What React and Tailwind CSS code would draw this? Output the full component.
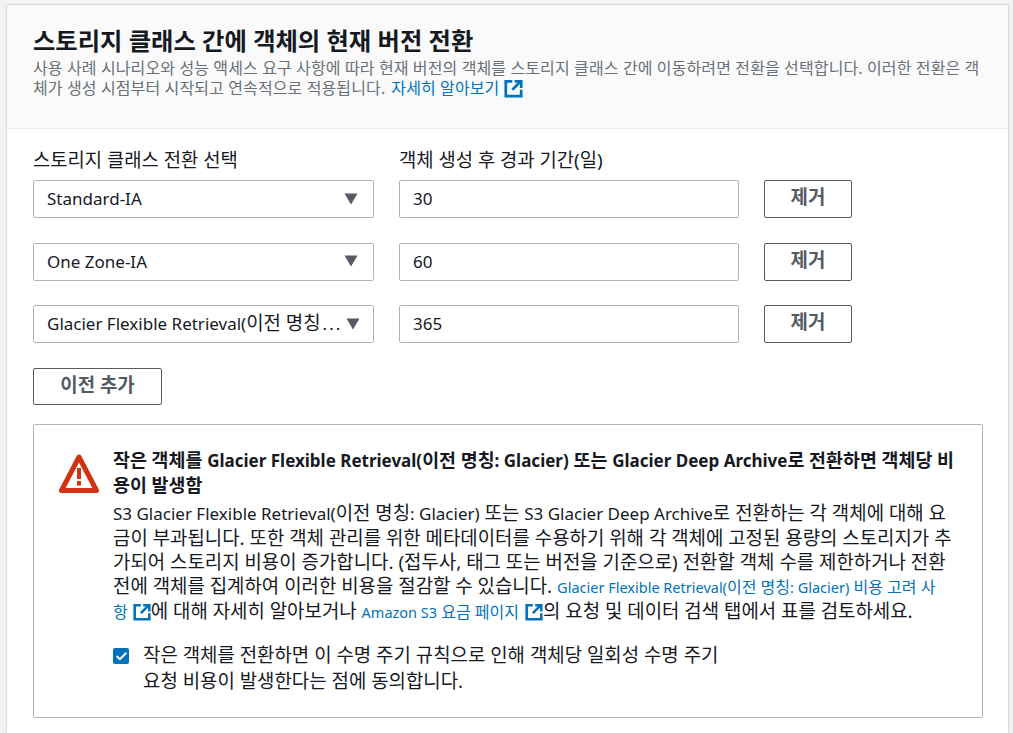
import { Check } from 'lucide-react'

function L({ children }) {
  return <span className="text-[17px]">{children}</span>
}

function Link({ children }) {
  return <a className="text-[16px] text-[#0073bb]">{children}</a>
}

function LinkL({ children }) {
  return <span className="text-[14.500px]">{children}</span>
}

const rows = [
  { storage: <L>Standard-IA</L>, days: '30' },
  { storage: <L>One Zone-IA</L>, days: '60' },
  { storage: <><L>Glacier Flexible Retrieval(</L>이전 명칭<span className="ml-[2px] text-[17px] tracking-[2px]">...</span></>, days: '365' },
]

function ExternalIcon({ className }) {
  return (
    <svg viewBox="0 0 16 16" fill="none" stroke="currentColor" strokeWidth="2.300" className={className}>
      <path d="M7 2H1.500v12.500h13V9" />
      <path d="M9 2h5.500v5.500" />
      <path d="M14.500 1.500 7 9" />
    </svg>
  )
}

function Select({ value }) {
  return (
    <div className="flex items-center w-[341px] h-[38px] pl-[13px] pr-[15px] pb-[1px] gap-1 bg-white border border-[#aab7b8] rounded-[2px]">
      <span className="flex-1 whitespace-nowrap text-[#16191f]">{value}</span>
      <svg viewBox="0 0 14 12" className="w-[14px] h-[12px] text-[#545b64] shrink-0" fill="currentColor">
        <path d="M0.500 0.500h13L7 11.500z" />
      </svg>
    </div>
  )
}

function Row({ storage, days }) {
  return (
    <div className="flex items-center h-[38px]">
      <Select value={storage} />
      <div className="ml-[25px] w-[340px] h-[38px] flex items-center px-[13px] bg-white border border-[#aab7b8] rounded-[2px] text-[17px] text-[#16191f]">{days}</div>
      <button className="ml-[25px] w-[88px] h-[38px] pb-[3px] border border-[#545b64] rounded-[2px] bg-white text-[#545b64] font-bold">제거</button>
    </div>
  )
}

export default function App() {
  return (
    <div className="h-screen overflow-hidden bg-[#f2f3f3] pl-[7px] pr-[5px] pt-[5px] text-[18.900px] text-[#16191f] font-['Noto_Sans','Noto_Sans_CJK_KR',sans-serif]">
      <div className="h-full bg-white shadow-[0_0_2px_rgba(0,28,36,0.35)]">
        {/* Header */}
        <div className="h-[124px] px-[26px] pt-[20px] bg-[#fafafa] border-b border-[#eaeded]">
          <h2 className="text-[24.300px] leading-[32px] font-bold whitespace-nowrap">스토리지 클래스 간에 객체의 현재 버전 전환</h2>
          <p className="text-[16px] leading-[20px] mt-[1px] text-[#687078] whitespace-nowrap tracking-[0.120px]">
            <span className="block">사용 사례 시나리오와 성능 액세스 요구 사항에 따라 현재 버전의 객체를 스토리지 클래스 간에 이동하려면 전환을 선택합니다. 이러한 전환은 객</span>
            <span className="flex items-center">
              체가 생성 시점부터 시작되고 연속적으로 적용됩니다.
              <a className="ml-[6px] text-[#0073bb] flex items-center">
                자세히 알아보기
                <ExternalIcon className="ml-[5px] w-[19px] h-[19px]" />
              </a>
            </span>
          </p>
        </div>

        {/* Transitions */}
        <div className="px-[26px] pt-[19px]">
          <div className="flex h-[32px] leading-[24px] text-[18.800px]">
            <span className="w-[366px]">스토리지 클래스 전환 선택</span>
            <span>객체 생성 후 경과 기간(일)</span>
          </div>
          <div className="flex flex-col gap-[24.500px]">
            {rows.map((row) => (
              <Row key={row.days} {...row} />
            ))}
          </div>
          <button className="mt-[25px] w-[129px] h-[37px] pb-[3px] border border-[#545b64] rounded-[2px] bg-white text-[#545b64] font-bold">이전 추가</button>

          {/* Warning */}
          <div className="mt-[19px] w-[950px] h-[294px] flex border border-[#aab7b8] rounded-[2px] pl-[25px] pt-[23px]">
            <svg viewBox="0 0 40 40" className="w-[40px] h-[40px] mt-[6px] shrink-0">
              <path d="M20 3 2.500 36.500h35z" fill="none" stroke="#d13212" strokeWidth="5" strokeLinejoin="round" />
              <path d="M18 14h4v11h-4zM18 27h4v4.500h-4z" fill="#d13212" />
            </svg>
            <div className="ml-[14px] w-[850px]">
              <div className="font-bold text-[18.400px] leading-[24px] whitespace-nowrap">
                <span className="block">작은 객체를 <L>Glacier Flexible Retrieval(</L>이전 명칭<L>: Glacier)</L> 또는 <L>Glacier Deep Archive</L>로 전환하면 객체당 비</span>
                <span className="block">용이 발생함</span>
              </div>
              <div className="mt-[4px] leading-[24px] whitespace-nowrap">
                <span className="block"><L>S3 Glacier Flexible Retrieval(</L>이전 명칭<L>: Glacier)</L> 또는 <L>S3 Glacier Deep Archive</L>로 전환하는 각 객체에 대해 요</span>
                <span className="block">금이 부과됩니다. 또한 객체 관리를 위한 메타데이터를 수용하기 위해 각 객체에 고정된 용량의 스토리지가 추</span>
                <span className="block">가되어 스토리지 비용이 증가합니다. (접두사, 태그 또는 버전을 기준으로) 전환할 객체 수를 제한하거나 전환</span>
                <span className="block">
                  전에 객체를 집계하여 이러한 비용을 절감할 수 있습니다.{' '}
                  <Link><LinkL>Glacier Flexible Retrieval(</LinkL>이전 명칭<LinkL>: Glacier)</LinkL> 비용 고려 사</Link>
                </span>
                <span className="block">
                  <Link>항</Link>
                  <ExternalIcon className="inline-block align-[-3px] ml-[5px] w-[18px] h-[18px] text-[#0073bb]" />
                  에 대해 자세히 알아보거나{' '}
                  <Link><LinkL>Amazon S3</LinkL> 요금 페이지</Link>
                  <ExternalIcon className="inline-block align-[-3px] ml-[6px] w-[18px] h-[18px] text-[#0073bb]" />
                  의 요청 및 데이터 검색 탭에서 표를 검토하세요.
                </span>
              </div>
              <label className="mt-[18px] flex">
                <span className="mt-[6px] w-[16px] h-[16px] flex items-center justify-center bg-[#0073bb] rounded-[2px] shrink-0">
                  <Check size={13} strokeWidth={3.5} className="text-white" />
                </span>
                <span className="ml-[14px] leading-[26px] whitespace-nowrap">
                  <span className="block">작은 객체를 전환하면 이 수명 주기 규칙으로 인해 객체당 일회성 수명 주기</span>
                  <span className="block">요청 비용이 발생한다는 점에 동의합니다.</span>
                </span>
              </label>
            </div>
          </div>
        </div>
      </div>
    </div>
  )
}
